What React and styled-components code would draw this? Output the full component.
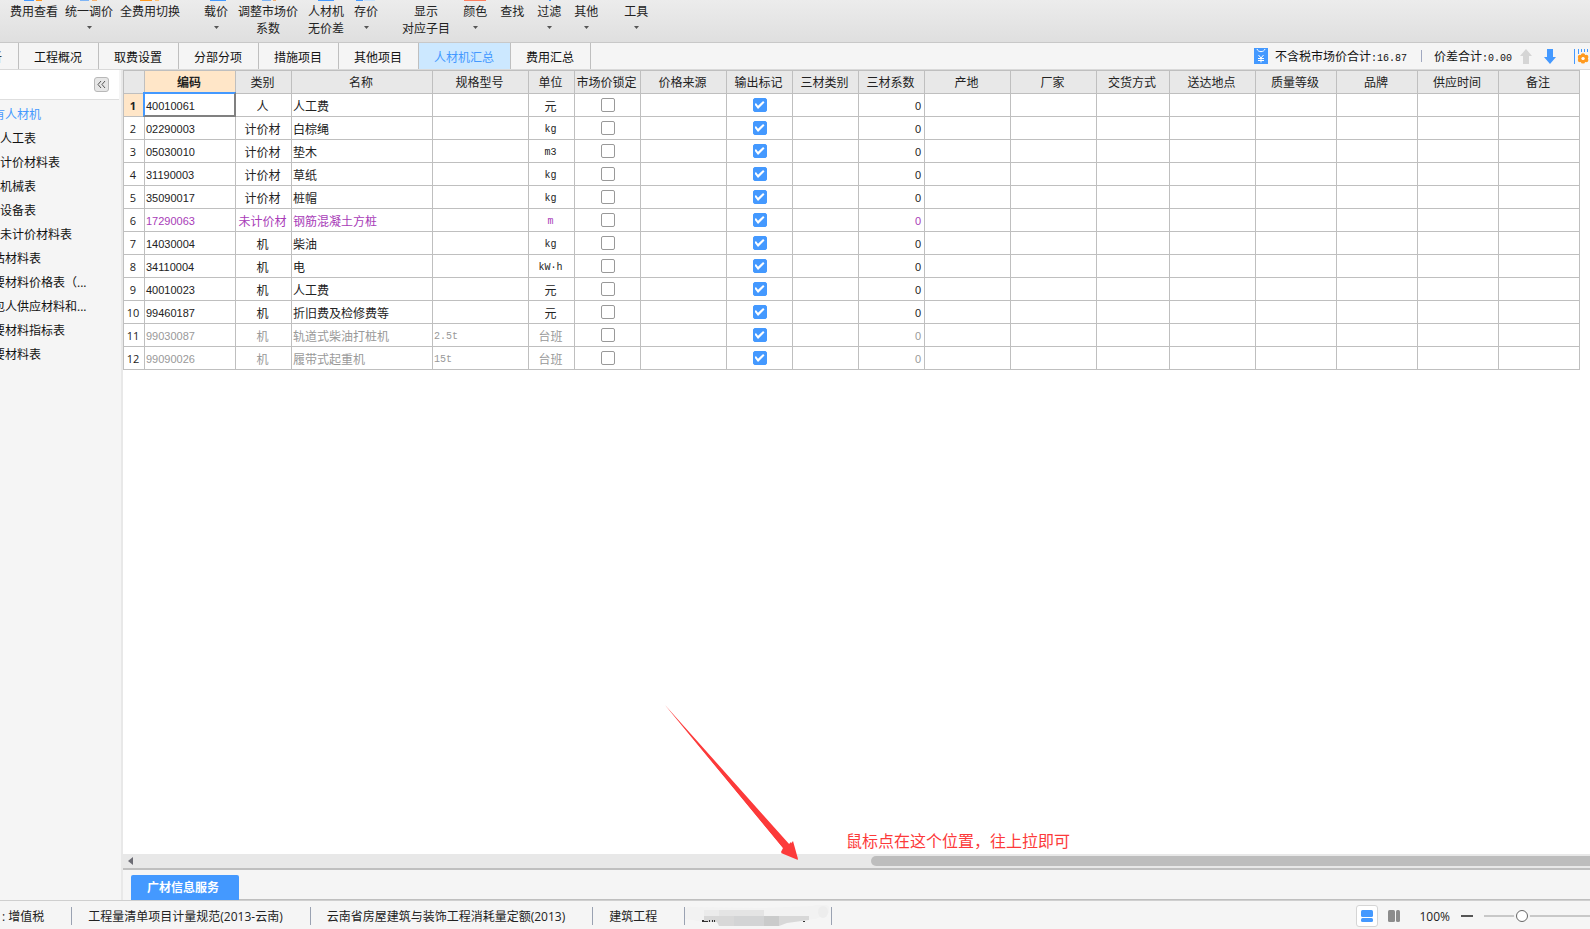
import React, { useState } from 'react';
import styled, { createGlobalStyle, css } from 'styled-components';

const GlobalStyle = createGlobalStyle`
	*, *::before, *::after {
		box-sizing: border-box;
	}
	body {
		margin: 0;
		color: #222;
		font-family: 'Open Sans', 'Noto Sans CJK SC', sans-serif;
		font-size: 12px;
		line-height: 17px;
		overflow: hidden;
	}
	button, input {
		font: inherit;
		margin: 0;
	}
	button {
		border: 0;
		padding: 0;
		color: inherit;
		background: none;
		white-space: nowrap;
	}
`;

const Page = styled.div`
	display: flex;
	flex-direction: column;
	height: 100vh;
	background: #f5f5f5;
`;

const Ribbon = styled.header`
	display: flex;
	flex: none;
	height: 43px;
	overflow: hidden;
	background: linear-gradient(#ececec, #dfdfdf);
	border-bottom: 1px solid #c8c8c8;
`;

const RibbonGroup = styled.div`
	display: flex;
	align-items: flex-start;
	gap: ${(props) => props.gap}px;
	margin-left: ${(props) => props.lead}px;
`;

const RibbonButton = styled.button`
	display: flex;
	flex-direction: column;
	align-items: center;
`;

const DropMark = styled.svg`
	margin-top: 6px;
`;

const TabBar = styled.nav`
	display: flex;
	flex: none;
	height: 27px;
	overflow: hidden;
	background: #f5f5f5;
	border-bottom: 1px solid #d9d9d9;
`;

const Tab = styled.button`
	flex: none;
	width: ${(props) => props.width}px;
	padding: 3px 1px 0 0;
	color: ${(props) => (props.active ? '#4499ff' : '#111')};
	background: ${(props) => (props.active ? '#cce8ff' : 'transparent')};
	border-right: 1px solid #bfbfbf;
	overflow: hidden;
`;

const CutTab = styled(Tab)`
	display: flex;
	align-items: center;
	justify-content: flex-end;
	padding-right: 16px;
`;

const Totals = styled.div`
	display: flex;
	align-items: center;
	margin-left: auto;
	color: #111;
	white-space: nowrap;
`;

const Total = styled.span`
	padding: 3px 0 0 7px;
`;

const Num = styled.span`
	font-family: 'Liberation Mono', monospace;
	font-size: 10px;
`;

const Bar = styled.i`
	width: 1px;
	height: 12px;
	margin: 0 5px 0 14px;
	background: #a0a8c0;
`;

const IconButton = styled.button`
	display: flex;
	margin-left: ${(props) => props.gap}px;
`;

const Body = styled.div`
	display: flex;
	flex: 1;
	min-height: 0;
`;

const Sidebar = styled.aside`
	flex: none;
	width: 123px;
	overflow: hidden;
	border-right: 2px solid #e8e8e8;
`;

const SidebarHead = styled.div`
	display: flex;
	align-items: center;
	justify-content: flex-end;
	height: 30px;
	margin-right: 2px;
	padding-right: 10px;
	background: #fff;
	border-bottom: 1px solid #dedede;
`;

const Collapse = styled.button`
	display: flex;
	align-items: center;
	justify-content: center;
	width: 15px;
	height: 15px;
	background: #e6e6e6;
	border: 1px solid #b8b8b8;
	border-radius: 3px;
`;

const Tree = styled.ul`
	margin: 0;
	padding: 3px 0;
	list-style: none;
`;

const TreeItem = styled.li`
	height: 24px;
	line-height: 24px;
	margin-left: ${(props) => (props.root ? '-7px' : '0')};
	color: ${(props) => (props.active ? '#4499ff' : '#111')};
	white-space: nowrap;
`;

const Main = styled.main`
	position: relative;
	display: flex;
	flex: 1;
	flex-direction: column;
	min-width: 0;
`;

const GridArea = styled.div`
	flex: 1;
	min-height: 0;
	overflow: hidden;
	background: #fff;
`;

const Grid = styled.table`
	table-layout: fixed;
	width: 1457px;
	border-collapse: separate;
	border-spacing: 0;
	border-top: 1px solid #bfbfbf;
	border-left: 1px solid #bfbfbf;
`;

const cell = css`
	height: 23px;
	line-height: 17px;
	border-right: 1px solid #bfbfbf;
	border-bottom: 1px solid #bfbfbf;
	white-space: nowrap;
`;

const Th = styled.th`
	${cell}
	padding: 0 2px 0 0;
	font-weight: ${(props) => (props.selected ? 700 : 400)};
	background: ${(props) => (props.selected ? '#ffe6c8' : '#e8e8e8')};
`;

const RowHead = styled(Th)`
	font-size: 11px;
	background: ${(props) => (props.selected ? '#ffe6c8' : '#fff')};
`;

const rowColors = { normal: '#222', pending: '#a83cb8', muted: '#999' };

const Row = styled.tr`
	color: ${(props) => rowColors[props.tone]};

	${RowHead} {
		color: #222;
	}
`;

const Td = styled.td`
	${cell}
	position: relative;
	padding: 2px 3px 0 1px;
	text-align: ${(props) => props.align || 'left'};

	${(props) =>
		props.digits &&
		css`
			font-family: 'Liberation Sans', sans-serif;
			font-size: 11px;
		`}

	${(props) =>
		props.mono &&
		css`
			padding-top: 3px;
			font-family: 'Liberation Mono', 'Noto Sans CJK SC', monospace;
			font-size: 10px;
		`}

	${(props) =>
		props.selected &&
		css`
			&::after {
				content: '';
				position: absolute;
				z-index: 1;
				inset: -2px -1px -1px -2px;
				border: 2px solid #808080;
				border-top-color: #4499ff;
				border-left-color: #4499ff;
			}
		`}
`;

const CheckCell = styled.td`
	${cell}
	padding: 0;
`;

const Check = styled.input`
	appearance: none;
	display: block;
	width: 14px;
	height: 14px;
	margin: 0 auto;
	background: #fff;
	border: 1px solid #999;
	border-radius: 2px;

	&:checked {
		background: #4499ff;
		border-color: #4499ff;
	}

	&:checked::before {
		content: '';
		display: block;
		width: 10px;
		height: 8px;
		margin: 2px 1px;
		background: #fff;
		clip-path: polygon(0 45%, 14% 26%, 35% 58%, 86% 0, 100% 18%, 35% 100%);
	}
`;

const ScrollBar = styled.div`
	display: flex;
	flex: none;
	align-items: center;
	height: 14px;
	padding-left: 5px;
	background: #e8e8e8;
	overflow: hidden;
`;

const ScrollThumb = styled.div`
	width: calc(50% - 12px);
	height: 10px;
	margin-left: auto;
	background: #bdbdbd;
	border-radius: 5px 0 0 5px;
`;

const Dock = styled.div`
	display: flex;
	flex: none;
	align-items: flex-end;
	height: 32px;
	padding-left: 8px;
	border-top: 2px solid #bfbfbf;
`;

const DockLine = styled.div`
	flex: 1;
	border-bottom: 1px solid #bfbfbf;
`;

const DockTab = styled.button`
	width: 108px;
	height: 25px;
	padding: 0 4px 1px 0;
	color: #fff;
	font-weight: 700;
	background: #4499ff;
	border-radius: 2px 2px 0 0;
`;

const Pointer = styled.svg`
	position: absolute;
	left: 542px;
	bottom: 40px;
`;

const Note = styled.p`
	position: absolute;
	left: 723px;
	bottom: 47px;
	margin: 0;
	color: #fc3a3a;
	font-size: 16px;
	line-height: 24px;
	white-space: nowrap;
`;

const StatusBar = styled.footer`
	display: flex;
	flex: none;
	align-items: center;
	height: 29px;
	padding-top: 2px;
	overflow: hidden;
	border-top: 1px solid #cfcfcf;
	white-space: nowrap;
`;

const StatusItem = styled.span`
	display: flex;
	align-items: center;
	height: 18px;
	padding: 0 27px 0 16px;
	border-right: 1px solid #9aa2b2;
`;

const StatusStart = styled(StatusItem)`
	padding-left: 2px;
`;

const StatusSmudge = styled(StatusItem)`
	padding: 0;
`;

const View = styled.div`
	display: flex;
	align-items: center;
	margin-left: auto;
`;

const ViewButton = styled.button`
	display: flex;
	align-items: center;
	justify-content: center;
	width: 22px;
	height: 22px;
	background: ${(props) => (props.active ? '#fff' : 'transparent')};
	border: 1px solid ${(props) => (props.active ? '#d5d5d5' : 'transparent')};
	border-radius: 3px;
	margin-right: 5px;
`;

const Zoom = styled.label`
	display: flex;
	align-items: center;
	margin-left: 9px;
	gap: 11px;
`;

const Slider = styled.input`
	appearance: none;
	width: 106px;
	height: 16px;
	background: linear-gradient(#c8c8c8, #c8c8c8) center / 100% 2px no-repeat;

	&::-webkit-slider-thumb {
		appearance: none;
		width: 12px;
		height: 12px;
		background: #fff;
		border: 1px solid #666;
		border-radius: 50%;
		box-shadow: 0 0 0 2px #f5f5f5;
	}
`;

const ribbon = [
	{
		lead: 10,
		gap: 7,
		items: [
			{ lines: ['费用查看'], icon: [['#4499ff', 2, 10], ['#ff9a1f', 14, 6]] },
			{ lines: ['统一调价'], drop: true, icon: [['#7fb5f5', 3, 9], ['#f5b070', 15, 5]] },
			{ lines: ['全费用切换'], icon: [['#ff9a1f', 2, 12], ['#ffc070', 17, 4]] },
		],
	},
	{
		lead: 24,
		gap: 10,
		items: [
			{ lines: ['载价'], drop: true, icon: [['#4499ff', 6, 16]] },
			{ lines: ['调整市场价', '系数'], icon: [['#7fb5f5', 6, 9], ['#f5b070', 17, 3]] },
			{ lines: ['人材机', '无价差'], icon: [['#4499ff', 4, 16]] },
			{ lines: ['存价'], drop: true, icon: [['#4499ff', 2, 7], ['#c5e0fb', 10, 11]] },
		],
	},
	{
		lead: 24,
		gap: 13,
		items: [
			{ lines: ['显示', '对应子目'], icon: [] },
			{ lines: ['颜色'], drop: true, icon: [['#ff7f5f', 1, 22]] },
			{ lines: ['查找'], icon: [] },
			{ lines: ['过滤'], drop: true, icon: [['#4499ff', 12, 2]] },
			{ lines: ['其他'], drop: true, icon: [] },
		],
	},
	{ lead: 26, gap: 0, items: [{ lines: ['工具'], drop: true, icon: [] }] },
];

const tabs = [
	{ name: '工程概况', width: 80 },
	{ name: '取费设置', width: 80 },
	{ name: '分部分项', width: 80 },
	{ name: '措施项目', width: 80 },
	{ name: '其他项目', width: 80 },
	{ name: '人材机汇总', width: 92 },
	{ name: '费用汇总', width: 80 },
];

const tree = [
	{ name: '有人材机', root: true },
	{ name: '人工表' },
	{ name: '计价材料表' },
	{ name: '机械表' },
	{ name: '设备表' },
	{ name: '未计价材料表' },
	{ name: '估材料表', root: true },
	{ name: '要材料价格表（...', root: true },
	{ name: '包人供应材料和...', root: true },
	{ name: '要材料指标表', root: true },
	{ name: '要材料表', root: true },
];

const columns = [
	['', 21],
	['编码', 91],
	['类别', 56],
	['名称', 141],
	['规格型号', 96],
	['单位', 46],
	['市场价锁定', 66],
	['价格来源', 86],
	['输出标记', 66],
	['三材类别', 66],
	['三材系数', 66],
	['产地', 86],
	['厂家', 86],
	['交货方式', 73],
	['送达地点', 86],
	['质量等级', 81],
	['品牌', 81],
	['供应时间', 81],
	['备注', 81],
];

const rows = [
	['40010061', '人', '人工费', '', '元'],
	['02290003', '计价材', '白棕绳', '', 'kg'],
	['05030010', '计价材', '垫木', '', 'm3'],
	['31190003', '计价材', '草纸', '', 'kg'],
	['35090017', '计价材', '桩帽', '', 'kg'],
	['17290063', '未计价材', '钢筋混凝土方桩', '', 'm', 'pending'],
	['14030004', '机', '柴油', '', 'kg'],
	['34110004', '机', '电', '', 'kW·h'],
	['40010023', '机', '人工费', '', '元'],
	['99460187', '机', '折旧费及检修费等', '', '元'],
	['99030087', '机', '轨道式柴油打桩机', '2.5t', '台班', 'muted'],
	['99090026', '机', '履带式起重机', '15t', '台班', 'muted'],
];

const isLatin = (text) => /^[a-z]/i.test(text);

const RibbonItem = ({ item }) => (
	<RibbonButton type="button">
		<svg width="24" height="3" aria-hidden="true">
			{item.icon.map(([fill, x, width]) => (
				<rect key={x} x={x} y="0" width={width} height="1" fill={fill} />
			))}
		</svg>
		{item.lines.map((line) => (
			<span key={line}>{line}</span>
		))}
		{item.drop && (
			<DropMark width="5" height="3" viewBox="0 0 5 3">
				<path d="M0 0h5L2.5 3z" fill="#555" />
			</DropMark>
		)}
	</RibbonButton>
);

const TotalsBar = () => (
	<Totals>
		<svg width="14" height="16" viewBox="0 0 14 16">
			<rect width="14" height="16" fill="#4499ff" />
			<path d="M3 1c1 3.5 7 3.5 8 0" fill="none" stroke="#fff" />
			<path
				d="M4.5 7L7 10l2.5-3M7 10v4.5M4 10.5h6M4 12.5h6"
				fill="none"
				stroke="#fff"
			/>
		</svg>
		<Total>
			不含税市场价合计<Num>:16.87</Num>
		</Total>
		<Bar />
		<Total>
			价差合计<Num>:0.00</Num>
		</Total>
		<IconButton gap={8} aria-label="上移">
			<svg width="12" height="15" viewBox="0 0 12 15">
				<path d="M6 0l6 7H9v8H3V7H0z" fill="#d5d5d5" />
			</svg>
		</IconButton>
		<IconButton gap={12} aria-label="下移">
			<svg width="12" height="15" viewBox="0 0 12 15">
				<path d="M6 15l6-7H9V0H3v8H0z" fill="#4499ff" />
			</svg>
		</IconButton>
		<IconButton gap={18} aria-label="列设置">
			<svg width="16" height="15" viewBox="0 0 16 15">
				<path d="M0 0h1v15H0zM4 0h1v5H4zM7 0h1v3H7zM10 0h1v3h-1zM13 0h1v3h-1z" fill="#4499ff" />
				<g fill="#ff9a1f">
					<circle cx="9" cy="6.5" r="2.2" />
					<circle cx="12.2" cy="8" r="2.2" />
					<circle cx="12.2" cy="11" r="2.2" />
					<circle cx="9" cy="12.4" r="2.2" />
					<circle cx="6" cy="11" r="2.2" />
					<circle cx="6" cy="8" r="2.2" />
				</g>
				<circle cx="9" cy="9.5" r="1.6" fill="#fff" />
			</svg>
		</IconButton>
	</Totals>
);

const MaterialGrid = () => (
	<Grid>
		<colgroup>
			{columns.map(([name, width]) => (
				<col key={name} style={{ width }} />
			))}
		</colgroup>
		<thead>
			<tr>
				{columns.map(([name]) => (
					<Th key={name} scope="col" selected={name === '编码'}>
						{name}
					</Th>
				))}
			</tr>
		</thead>
		<tbody>
			{rows.map(([code, kind, name, spec, unit, tone = 'normal'], i) => (
				<Row key={code} tone={tone}>
					<RowHead scope="row" selected={i === 0}>
						{i + 1}
					</RowHead>
					<Td digits selected={i === 0}>
						{code}
					</Td>
					<Td align="center">{kind}</Td>
					<Td>{name}</Td>
					<Td mono>{spec}</Td>
					<Td align="center" mono={isLatin(unit)}>
						{unit}
					</Td>
					<CheckCell>
						<Check type="checkbox" aria-label={`市场价锁定 ${code}`} />
					</CheckCell>
					<Td />
					<CheckCell>
						<Check type="checkbox" defaultChecked aria-label={`输出标记 ${code}`} />
					</CheckCell>
					<Td />
					<Td align="right" digits>
						0
					</Td>
					{columns.slice(11).map(([col]) => (
						<Td key={col} />
					))}
				</Row>
			))}
		</tbody>
	</Grid>
);

const Smudge = () => (
	<svg width="146" height="22" viewBox="0 0 146 22">
		<path d="M0 4q2-3 8-2l70 1 50-2q12-4 16 1v6l-14 6-40 3H20L0 14z" fill="#f2f2f2" />
		<ellipse cx="138" cy="7" rx="5" ry="6" fill="#ededed" />
		<path d="M19 5h15v6H19z" fill="#ebebeb" />
		<path d="M34 5h45v6H34z" fill="#e4e4e4" />
		<path d="M19 11h105v4l-22 3-8 3H34l-2-4H19z" fill="#d8d8d8" />
		<path d="M49 11h30v10H49z" fill="#d3d4d5" />
		<path d="M79 11h15v10H79z" fill="#cacbcb" />
		<path d="M17 15h2v1h4v1h-6zM24 15h1v2h-1zM27 15h1v2h-1zM29 15h1v2h-1zM118 16h2v1h-2z" fill="#333" />
	</svg>
);

const App = () => {
	const [active, setActive] = useState('人材机汇总');
	const [zoom, setZoom] = useState(34);
	return (
		<Page>
			<GlobalStyle />
			<Ribbon>
				{ribbon.map((group) => (
					<RibbonGroup key={group.items[0].lines[0]} lead={group.lead} gap={group.gap}>
						{group.items.map((item) => (
							<RibbonItem key={item.lines[0]} item={item} />
						))}
					</RibbonGroup>
				))}
			</Ribbon>
			<TabBar>
				<CutTab type="button" width={19}>
					析
				</CutTab>
				{tabs.map(({ name, width }) => (
					<Tab
						key={name}
						type="button"
						width={width}
						active={active === name}
						onClick={() => setActive(name)}
					>
						{name}
					</Tab>
				))}
				<TotalsBar />
			</TabBar>
			<Body>
				<Sidebar>
					<SidebarHead>
						<Collapse type="button" aria-label="收起">
							<svg width="9" height="7" viewBox="0 0 9 7">
								<path
									d="M4 0L1 3.5 4 7M8 0L5 3.5 8 7"
									fill="none"
									stroke="#555"
								/>
							</svg>
						</Collapse>
					</SidebarHead>
					<Tree>
						{tree.map(({ name, root }, i) => (
							<TreeItem key={name} root={root} active={i === 0}>
								{name}
							</TreeItem>
						))}
					</Tree>
				</Sidebar>
				<Main>
					<GridArea>
						<MaterialGrid />
					</GridArea>
					<ScrollBar>
						<svg width="5" height="8" viewBox="0 0 5 8">
							<path d="M5 0v8L0 4z" fill="#6c6c74" />
						</svg>
						<ScrollThumb />
					</ScrollBar>
					<Dock>
						<DockTab type="button">广材信息服务</DockTab>
						<DockLine />
					</Dock>
					<Pointer width="134" height="155" viewBox="0 0 134 155">
						<path d="M0 0L120 143l6-6 7 18-17-7 3-4z" fill="#fc3a3a" />
						<path d="M0 0L125 140l3-4 5 18-17-7 2-4z" fill="#fc3a3a" />
					</Pointer>
					<Note>鼠标点在这个位置，往上拉即可</Note>
				</Main>
			</Body>
			<StatusBar>
				<StatusStart>: 增值税</StatusStart>
				<StatusItem>工程量清单项目计量规范(2013-云南)</StatusItem>
				<StatusItem>云南省房屋建筑与装饰工程消耗量定额(2013)</StatusItem>
				<StatusItem>建筑工程</StatusItem>
				<StatusSmudge>
					<Smudge />
				</StatusSmudge>
				<View>
					<ViewButton type="button" active aria-label="上下布局">
						<svg width="12" height="12" viewBox="0 0 12 12" fill="#4499ff">
							<rect width="12" height="7" rx="1.5" />
							<rect y="8" width="12" height="4" rx="1.5" />
						</svg>
					</ViewButton>
					<ViewButton type="button" aria-label="左右布局">
						<svg width="12" height="12" viewBox="0 0 12 12" fill="#8c8c8c">
							<rect width="7" height="12" rx="1.5" />
							<rect x="8" width="4" height="12" rx="1.5" />
						</svg>
					</ViewButton>
					<Zoom>
						100%
						<svg width="12" height="2">
							<rect width="12" height="2" fill="#555" />
						</svg>
						<Slider
							type="range"
							min="0"
							max="100"
							value={zoom}
							onChange={(e) => setZoom(Number(e.target.value))}
						/>
					</Zoom>
				</View>
			</StatusBar>
		</Page>
	);
};
export default App;
